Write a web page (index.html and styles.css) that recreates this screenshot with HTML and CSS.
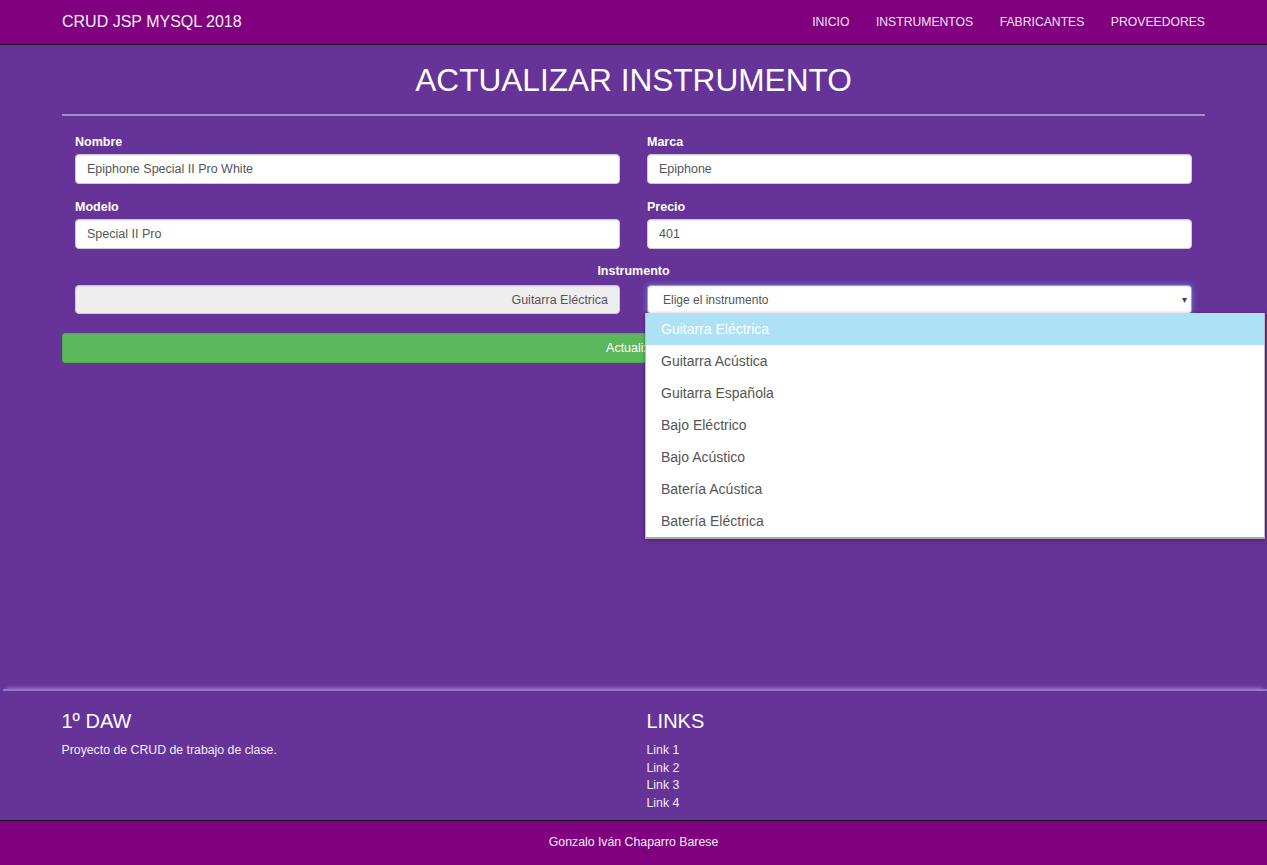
FILE: index.html
```html
<!DOCTYPE html>
<html lang="es">
<head>
<meta charset="utf-8">
<title>Actualizar instrumento</title>
<link rel="stylesheet" href="styles.css">
</head>
<body>
<header class="navbar">
  <div class="container nav-inner">
    <a class="brand" href="#">CRUD JSP MYSQL 2018</a>
    <nav class="nav-links">
      <a href="#">INICIO</a>
      <a href="#">INSTRUMENTOS</a>
      <a href="#">FABRICANTES</a>
      <a href="#">PROVEEDORES</a>
    </nav>
  </div>
</header>

<main class="main">
  <div class="container">
    <h1 class="title">ACTUALIZAR INSTRUMENTO</h1>
    <hr class="divider">
    <form class="form">
      <div class="grid">
        <div class="field">
          <label>Nombre</label>
          <div class="input">Epiphone Special II Pro White</div>
        </div>
        <div class="field">
          <label>Marca</label>
          <div class="input">Epiphone</div>
        </div>
        <div class="field">
          <label>Modelo</label>
          <div class="input">Special II Pro</div>
        </div>
        <div class="field">
          <label>Precio</label>
          <div class="input">401</div>
        </div>
      </div>
      <div class="center-label">Instrumento</div>
      <div class="grid">
        <div class="input disabled">Guitarra Eléctrica</div>
        <div class="select-wrap">
          <div class="input select focus">Elige el instrumento<span class="arrow">▾</span></div>
          <ul class="dropdown">
            <li class="active">Guitarra Eléctrica</li>
            <li>Guitarra Acústica</li>
            <li>Guitarra Española</li>
            <li>Bajo Eléctrico</li>
            <li>Bajo Acústico</li>
            <li>Batería Acústica</li>
            <li>Batería Eléctrica</li>
          </ul>
        </div>
      </div>
    </form>
    <button class="btn-success" type="button">Actualizar</button>
  </div>
</main>

<footer class="footer">
  <div class="container footer-cols">
    <div class="fcol">
      <h4>1º DAW</h4>
      <p>Proyecto de CRUD de trabajo de clase.</p>
    </div>
    <div class="fcol">
      <h4>LINKS</h4>
      <ul class="links">
        <li><a href="#">Link 1</a></li>
        <li><a href="#">Link 2</a></li>
        <li><a href="#">Link 3</a></li>
        <li><a href="#">Link 4</a></li>
      </ul>
    </div>
  </div>
</footer>
<div class="copyright">Gonzalo Iván Chaparro Barese</div>
</body>
</html>
```

FILE: styles.css
```css
* { box-sizing: border-box; }
html, body { margin: 0; padding: 0; }
body {
  font-family: "Liberation Sans", Arial, sans-serif;
  font-size: 13px;
  line-height: 1.42857;
  color: #fff;
  background: #663399;
  height: 865px;
  display: flex;
  flex-direction: column;
  overflow: hidden;
}
a { color: inherit; text-decoration: none; }

.container {
  width: 1143px;
  margin: 0 auto;
  padding-left: 0;
  padding-right: 0;
  position: relative;
}

/* navbar */
.navbar {
  background: #800080;
  height: 45px;
  border-bottom: 1px solid #111;
  flex: none;
}
.nav-inner {
  display: flex;
  align-items: center;
  justify-content: space-between;
  height: 44px;
}
.brand {
  font-size: 16px;
  color: #f4f0f6;
}
.nav-links {
  display: flex;
  gap: 26.5px;
  font-size: 12.2px;
  color: #efe6f0;
  padding-top: 2px;
}

/* main */
.main {
  flex: 1;
  position: relative;
}
.title {
  font-weight: normal;
  font-size: 31.6px;
  line-height: 40px;
  text-align: center;
  margin: 15px 0 0;
  color: #fff;
}
.divider {
  border: 0;
  border-top: 2px solid #a58cc6;
  margin: 14px 0 0;
}
.form {
  padding: 0 13px;
  margin-top: 17px;
}
.grid {
  display: grid;
  grid-template-columns: 1fr 1fr;
  column-gap: 27px;
  row-gap: 14px;
}
.field label {
  display: block;
  font-weight: bold;
  font-size: 12.5px;
  line-height: 18px;
  margin-bottom: 3px;
}
.input {
  height: 30px;
  background: #fff;
  border: 1px solid #ccc;
  border-radius: 4px;
  color: #555;
  font-size: 12.5px;
  line-height: 28px;
  padding: 0 11px;
  box-shadow: inset 0 1px 1px rgba(0,0,0,0.075);
}
.input.disabled {
  background: #eee;
  text-align: right;
  padding-right: 11px;
  height: 29px;
}
.center-label {
  text-align: center;
  font-weight: bold;
  font-size: 12.5px;
  line-height: 18px;
  margin: 13px 0 5px;
}
.select-wrap { position: relative; }
.input.select {
  position: relative;
  padding-left: 15px;
  font-size: 12px;
  height: 29px;
}
.input.focus {
  border-color: #66afe9;
  box-shadow: inset 0 1px 1px rgba(0,0,0,0.075), 0 0 6px rgba(102,175,233,0.6);
}
.arrow {
  position: absolute;
  right: 4px;
  top: 0;
  font-size: 10px;
  color: #444;
}
.dropdown {
  position: absolute;
  z-index: 10;
  top: 28px;
  left: -2px;
  width: 620px;
  margin: 0;
  padding: 0;
  list-style: none;
  background: #fff;
  border: 1px solid #bbb;
  border-top: 0;
  border-bottom: 2px solid #aaa;
  box-shadow: 0 1px 4px rgba(0,0,0,0.35);
}
.dropdown li {
  height: 32px;
  line-height: 32px;
  padding-left: 15px;
  font-size: 14px;
  color: #555;
}
.dropdown li.active {
  background: #ace1f6;
  color: #fff;
}
.btn-success {
  display: block;
  width: 100%;
  margin-top: 19px;
  height: 30px;
  background: #5cb85c;
  border: 1px solid #4cae4c;
  border-radius: 3px;
  color: #fff;
  font-family: "Liberation Sans", Arial, sans-serif;
  font-size: 12.5px;
  padding: 0;
}

/* footer */
.footer {
  flex: none;
  height: 131px;
  border-top: 2px solid #9677c4;
  box-shadow: 0 -4px 4px -3px rgba(210,190,240,0.5);
  margin-left: 3px;
}
.footer-cols {
  display: grid;
  grid-template-columns: 1fr 1fr;
  column-gap: 27px;
  left: -2px;
}
.fcol h4 {
  font-weight: normal;
  font-size: 20px;
  line-height: 24px;
  margin: 18px 0 0;
  color: #fff;
}
.fcol p {
  margin: 9px 0 0;
  font-size: 12.3px;
  color: #f2eef7;
}
.links {
  list-style: none;
  margin: 9px 0 0;
  padding: 0;
  font-size: 12.3px;
  line-height: 17.5px;
  color: #f2eef7;
}
.copyright {
  flex: none;
  height: 45px;
  background: #800080;
  border-top: 1px solid #111;
  text-align: center;
  font-size: 12.3px;
  line-height: 43px;
  color: #f4eef4;
}
```
